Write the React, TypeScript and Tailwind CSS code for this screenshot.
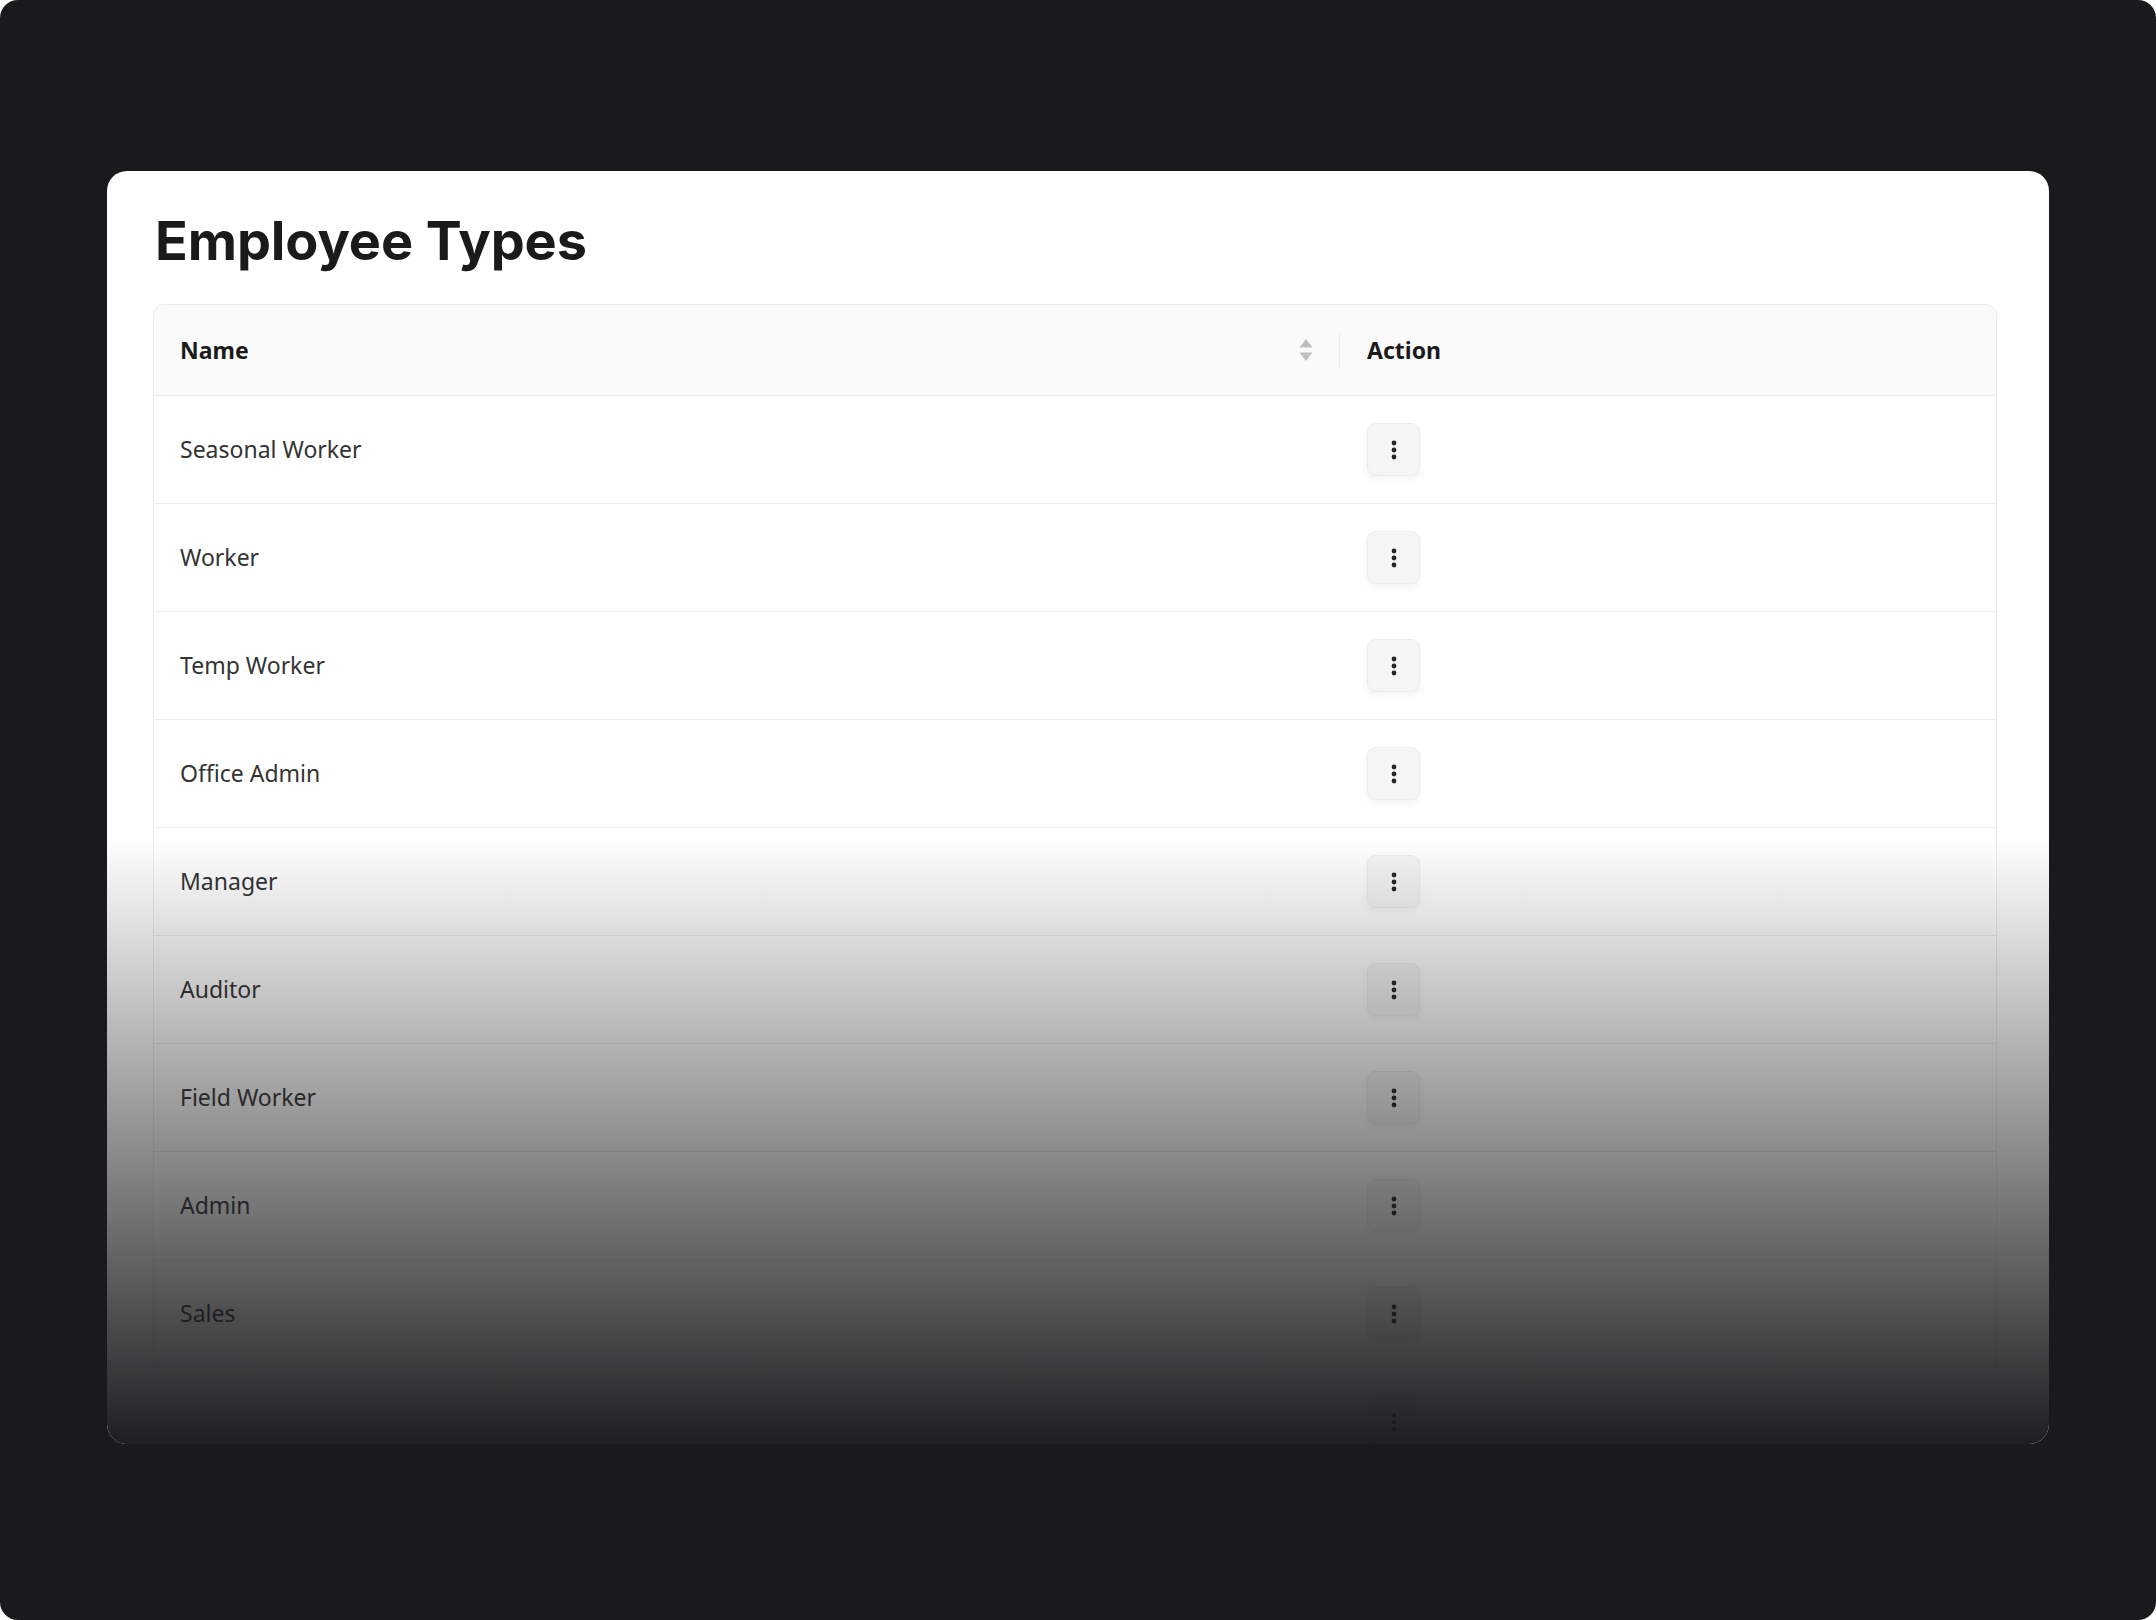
import React from "react";

const rows = [
  "Seasonal Worker",
  "Worker",
  "Temp Worker",
  "Office Admin",
  "Manager",
  "Auditor",
  "Field Worker",
  "Admin",
  "Sales",
  "",
];

function DotsButton() {
  return (
    <button className="flex h-[53px] w-[53px] items-center justify-center rounded-[9px] border border-[#ececec] bg-[#f5f5f5] shadow-[0_3px_6px_rgba(0,0,0,0.05)]">
      <svg width="6" height="22" viewBox="0 0 6 22" fill="#262626">
        <circle cx="3" cy="4" r="2.4" />
        <circle cx="3" cy="11" r="2.4" />
        <circle cx="3" cy="18" r="2.4" />
      </svg>
    </button>
  );
}

function SortIcon() {
  return (
    <svg width="16" height="28" viewBox="0 0 16 28" fill="#bfbfbf">
      <path d="M8 3 L14.5 11.5 L1.5 11.5 Z" />
      <path d="M8 25 L14.5 16.5 L1.5 16.5 Z" />
    </svg>
  );
}

export default function App() {
  return (
    <div className="min-h-screen w-[2156px] bg-white">
      <div className="h-[1620px] w-[2156px] overflow-hidden rounded-[18px] bg-[#1a1a1c] px-[107px] pt-[171px]">
        <div className="relative h-[1273px] overflow-hidden rounded-[20px] bg-white pl-[46px] pr-[52px] pt-[39px]">
          <h1 className="px-[2px] font-['Inter',sans-serif] text-[54px] font-bold leading-[62px] tracking-[-0.1px] text-[#1a1a1a]">
            Employee Types
          </h1>
          <div className="mt-[32px] rounded-[11px] border border-[#ececec] font-['Noto_Sans','Open_Sans',sans-serif]">
            <div className="grid h-[91px] grid-cols-[1186px_1fr] rounded-t-[11px] border-b border-[#ececec] bg-[#fafafa]">
              <div className="relative flex items-center pl-[26px] pr-[26px] text-[23px] font-bold text-[#1a1a1a]">
                <span className="flex-1">Name</span>
                <SortIcon />
                <div className="absolute right-0 top-1/2 h-[36px] w-px -translate-y-1/2 bg-[#ececec]" />
              </div>
              <div className="flex items-center pl-[27px] text-[23px] font-bold text-[#1a1a1a]">
                Action
              </div>
            </div>
            {rows.map((r, i) => (
              <div
                key={i}
                className={`grid h-[108px] grid-cols-[1186px_1fr] ${i < rows.length - 1 ? "border-b border-[#ededed]" : ""}`}
              >
                <div className="flex items-center pl-[26px] text-[23px] text-[#333333]">{r}</div>
                <div className="flex items-center pl-[27px]">
                  <DotsButton />
                </div>
              </div>
            ))}
          </div>
          <div className="pointer-events-none absolute bottom-0 left-0 right-0 top-[668px] bg-gradient-to-b from-[rgba(26,26,28,0)] to-[rgba(26,26,28,0.98)]" />
        </div>
      </div>
    </div>
  );
}
